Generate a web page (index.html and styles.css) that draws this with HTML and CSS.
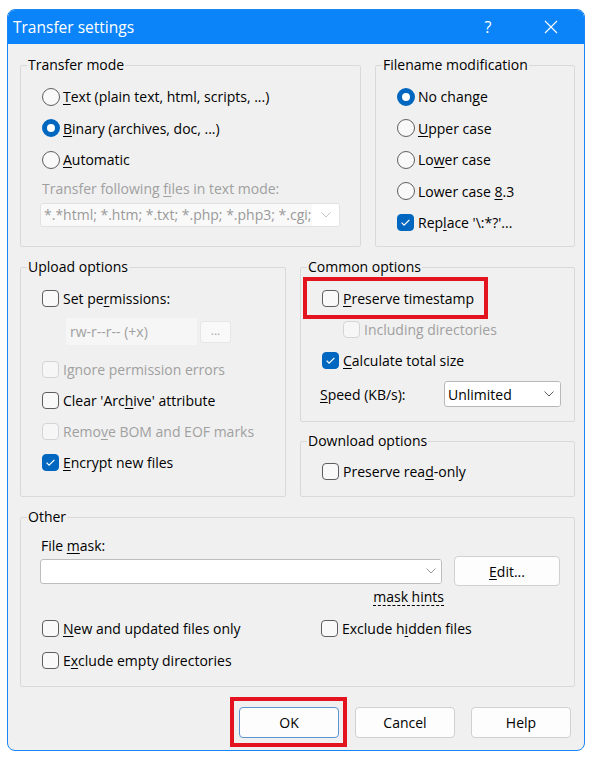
FILE: index.html
```html
<!DOCTYPE html>
<html lang="en">
<head>
<meta charset="utf-8">
<title>Transfer settings</title>
<link rel="stylesheet" href="styles.css">
</head>
<body>
<div class="window">
  <div class="titlebar">
    <span class="title">Transfer settings</span>
    <span class="tb-help">?</span>
    <span class="tb-close"><svg width="14" height="14" viewBox="0 0 14 14"><path d="M1 1L13 13M13 1L1 13" stroke="#fff" stroke-width="1.1" fill="none"/></svg></span>
  </div>
  <div class="content">
    <div class="row1">
      <section class="group g-transfer">
        <div class="group-title">Transfer mode</div>
        <div class="opts first8">
          <div class="opt h315"><span class="radio"></span><span><u>T</u>ext (plain text, html, scripts, ...)</span></div>
          <div class="opt h315"><span class="radio on"></span><span><u>B</u>inary (archives, doc, ...)</span></div>
          <div class="opt h315"><span class="radio"></span><span><u>A</u>utomatic</span></div>
          <div class="tm-label dis-text">Transfer following <u>f</u>iles in text mode:</div>
          <div class="combo combo-dis tm-combo">
            <span class="val">*.*html; *.htm; *.txt; *.php; *.php3; *.cgi; *.c; *.cpp</span>
            <span class="arrow"><svg width="10" height="6" viewBox="0 0 10 6"><polyline points="0.5,0.5 5,5 9.5,0.5" fill="none" stroke="#c4c4c4" stroke-width="1"/></svg></span>
          </div>
        </div>
      </section>
      <section class="group g-fname">
        <div class="group-title">Filename modification</div>
        <div class="opts first8">
          <div class="opt h315"><span class="radio on"></span><span>No chan<u>g</u>e</span></div>
          <div class="opt h315"><span class="radio"></span><span><u>U</u>pper case</span></div>
          <div class="opt h315"><span class="radio"></span><span>Lo<u>w</u>er case</span></div>
          <div class="opt h315"><span class="radio"></span><span>Lower case <u>8</u>.3</span></div>
          <div class="opt h315"><span class="box on"><svg width="15" height="15" viewBox="0 0 15 15"><path d="M3.6 7.6L6.1 10.1L11.4 4.9" fill="none" stroke="#fff" stroke-width="1.3"/></svg></span><span>Rep<u>l</u>ace '\:*?'...</span></div>
        </div>
      </section>
    </div>

    <div class="row2">
      <section class="group g-upload">
        <div class="group-title">Upload options</div>
        <div class="opts first8">
          <div class="opt"><span class="box"></span><span>Set pe<u>r</u>missions:</span></div>
          <div class="perms-row">
            <span class="perms-field">rw-r--r-- (+x)</span>
            <span class="perms-btn">...</span>
          </div>
          <div class="opt mt7"><span class="box dis"></span><span class="dis-text">I<u>g</u>nore permission errors</span></div>
          <div class="opt"><span class="box"></span><span>Clear 'Arc<u>h</u>ive' attribute</span></div>
          <div class="opt"><span class="box dis"></span><span class="dis-text">Remo<u>v</u>e BOM and EOF marks</span></div>
          <div class="opt"><span class="box on"><svg width="15" height="15" viewBox="0 0 15 15"><path d="M3.6 7.6L6.1 10.1L11.4 4.9" fill="none" stroke="#fff" stroke-width="1.3"/></svg></span><span><u>E</u>ncrypt new files</span></div>
        </div>
      </section>
      <div class="rightcol">
        <section class="group g-common">
          <div class="group-title">Common options</div>
          <div class="opts first8">
            <div class="opt annot"><span class="box"></span><span><u>P</u>reserve timestamp</span></div>
            <div class="opt indent"><span class="box dis"></span><span class="dis-text">Including directories</span></div>
            <div class="opt"><span class="box on"><svg width="15" height="15" viewBox="0 0 15 15"><path d="M3.6 7.6L6.1 10.1L11.4 4.9" fill="none" stroke="#fff" stroke-width="1.3"/></svg></span><span><u>C</u>alculate total size</span></div>
            <div class="speed-row">
              <span class="speed-label"><u>S</u>peed (KB/s):</span>
              <div class="combo speed-combo">
                <span class="val">Unlimited</span>
                <span class="arrow"><svg width="10" height="6" viewBox="0 0 10 6"><polyline points="0.5,0.5 5,5 9.5,0.5" fill="none" stroke="#606060" stroke-width="1"/></svg></span>
              </div>
            </div>
          </div>
        </section>
        <section class="group g-download">
          <div class="group-title">Download options</div>
          <div class="opts first7">
            <div class="opt"><span class="box"></span><span>Preserve rea<u>d</u>-only</span></div>
          </div>
        </section>
      </div>
    </div>

    <section class="group g-other">
      <div class="group-title">Other</div>
      <div class="other-body">
        <div class="fm-label">File <u>m</u>ask:</div>
        <div class="fm-row">
          <div class="combo fm-combo">
            <span class="val"></span>
            <span class="arrow"><svg width="10" height="6" viewBox="0 0 10 6"><polyline points="0.5,0.5 5,5 9.5,0.5" fill="none" stroke="#9a9a9a" stroke-width="1"/></svg></span>
          </div>
          <button class="btn edit-btn" type="button"><u>E</u>dit...</button>
        </div>
        <div class="hints-row"><span class="hints">mask hints</span></div>
        <div class="cb-grid">
          <div class="opt h32"><span class="box"></span><span><u>N</u>ew and updated files only</span></div>
          <div class="opt h32"><span class="box"></span><span>Exclude h<u>i</u>dden files</span></div>
          <div class="opt h32"><span class="box"></span><span>E<u>x</u>clude empty directories</span></div>
        </div>
      </div>
    </section>

    <div class="buttons">
      <span class="ok-wrap"><button class="btn dlg-btn ok-btn" type="button">OK</button></span>
      <button class="btn dlg-btn" type="button">Cancel</button>
      <button class="btn dlg-btn" type="button">Help</button>
    </div>
  </div>
</div>
</body>
</html>
```

FILE: styles.css
```css
* { box-sizing: border-box; }
html, body { margin: 0; padding: 0; background: #fff; }
body {
  font-family: "Open Sans", "Noto Sans", sans-serif;
  font-size: 14px;
  color: #000;
}
u { text-decoration-thickness: 1px; text-underline-offset: 2px; }

.window {
  width: 578px;
  height: 742px;
  margin: 9px 0 0 7px;
  border: 1px solid #1a86f5;
  border-radius: 8px;
  overflow: hidden;
  background: #f0f0f0;
  display: flex;
  flex-direction: column;
}
.titlebar {
  height: 34px;
  flex: none;
  background: #0b84f9;
  color: #fff;
  display: flex;
  align-items: center;
  padding-left: 5px;
}
.title { flex: 1; font-size: 15.5px; }
.tb-help { width: 46px; text-align: center; font-size: 16px; margin-right: 17px; }
.tb-close {
  width: 46px; height: 34px;
  display: flex; align-items: center; justify-content: center;
  margin-right: 10px;
}

.content { flex: 1; padding: 21px 9px 0 12px; }

.group {
  border: 1px solid #d9d9d9;
  border-radius: 2px;
}
.group-title {
  width: fit-content;
  margin: -10px 0 0 6px;
  padding: 0 1px;
  height: 17px;
  line-height: 17px;
  background: #f0f0f0;
  white-space: nowrap;
}

.row1 { display: flex; gap: 14px; }
.g-transfer { width: 341px; height: 182px; }
.g-fname { flex: 1; height: 182px; }

.row2 { display: grid; grid-template-columns: 266px 1fr; column-gap: 14px; margin-top: 20px; }
.g-upload { height: 230px; }
.g-common { height: 155px; }
.g-download { height: 56px; margin-top: 19px; }

.g-other { height: 170px; margin-top: 20px; }

.opts {
  display: flex;
  flex-direction: column;
  align-items: flex-start;
  padding-left: 21px;
}
.first8 { margin-top: 8px; }
.first7 { margin-top: 7px; }
.mt7 { margin-top: 7px; }

.opt { display: flex; align-items: center; height: 31px; white-space: nowrap; }
.opt.h315 { height: 31.5px; }
.opt.h32 { height: 32px; }
.opt.indent { margin-left: 21px; }

.box {
  width: 17px; height: 17px;
  flex: none;
  border: 1px solid #5e5e5e;
  border-radius: 4px;
  background: #f9f9f9;
  margin-right: 4px;
  display: flex; align-items: center; justify-content: center;
}
.box.on { background: #0067c0; border-color: #0067c0; }
.box.dis { border-color: #d4d4d4; background: #f6f6f6; }
.dis-text { color: #a0a0a0; }

.radio {
  width: 18px; height: 18px;
  flex: none;
  border-radius: 50%;
  border: 1px solid #5e5e5e;
  background: #f9f9f9;
  margin-right: 3px;
}
.radio.on { border: 5px solid #0067c0; background: #fff; }

.tm-label { margin-top: 3px; line-height: 19px; white-space: nowrap; }

.combo {
  display: flex;
  align-items: center;
  border: 1px solid #bdbdbd;
  border-radius: 3px;
  background: #fff;
  overflow: hidden;
}
.combo .val {
  flex: 1;
  min-width: 0;
  overflow: hidden;
  white-space: nowrap;
  padding-left: 3px;
}
.combo .arrow {
  flex: none;
  align-self: stretch;
  display: flex; align-items: center; justify-content: center;
  background: #fff;
}
.combo-dis { border-color: #e2e2e2; background: #f9f9f9; }
.combo-dis .val { color: #9a9a9a; }
.tm-combo { width: 300px; height: 24px; margin: 5px 0 0 -2px; }
.tm-combo .arrow { width: 27px; }

.perms-row { display: flex; align-items: center; height: 31px; margin: 2px 0 0 24px; }
.perms-field {
  width: 131px; height: 27px;
  background: #f6f6f6;
  color: #a0a0a0;
  padding-left: 4px;
  line-height: 27px;
}
.perms-btn {
  width: 31px; height: 22px;
  margin-left: 3px;
  border: 1px solid #e6e6e6;
  border-radius: 3px;
  background: #f9f9f9;
  color: #a8a8a8;
  font-size: 12px;
  line-height: 18px;
  text-align: center;
}

.annot { position: relative; }
.annot::after {
  content: "";
  position: absolute;
  left: -19px; right: -14px; top: -6px; bottom: -5px;
  border: 4px solid #e3131f;
  pointer-events: none;
}

.speed-row {
  align-self: stretch;
  display: flex;
  align-items: center;
  justify-content: space-between;
  height: 32px;
  margin-top: 2px;
  padding-right: 13px;
}
.speed-label { margin-left: -2px; white-space: nowrap; }
.speed-combo { width: 117px; height: 26px; border-color: #b8b8b8; }
.speed-combo .arrow { width: 22px; }

.other-body { padding-left: 20px; }
.fm-label { margin-top: 11px; line-height: 20px; }
.fm-row { display: flex; align-items: center; height: 30px; }
.fm-combo { width: 402px; height: 25px; margin-left: -1px; }
.fm-combo .arrow { width: 20px; }
.hints-row { width: 404px; margin: 2px 0 0 -1px; text-align: right; line-height: 18px; }
.hints {
  text-decoration: underline dashed;
  text-decoration-thickness: 1px;
  text-underline-offset: 3px;
}
.cb-grid {
  display: grid;
  grid-template-columns: 279px auto;
  margin: 6px 0 0 1px;
}

.btn {
  appearance: none;
  font: inherit;
  color: #000;
  border: 1px solid #d0d0d0;
  border-radius: 4px;
  background: #fdfdfd;
  display: flex; align-items: center; justify-content: center;
  padding: 0;
}
.edit-btn { width: 106px; height: 30px; margin-left: 12px; }

.buttons {
  display: flex;
  justify-content: flex-end;
  gap: 16px;
  margin-top: 20px;
  padding-right: 4px;
}
.dlg-btn { width: 100px; height: 31px; }
.ok-btn { border-color: #5e94cf; }
.ok-wrap { position: relative; display: flex; }
.ok-wrap::after {
  content: "";
  position: absolute;
  left: -9px; right: -8px; top: -10px; bottom: -9px;
  border: 4px solid #e3131f;
  pointer-events: none;
}
```
